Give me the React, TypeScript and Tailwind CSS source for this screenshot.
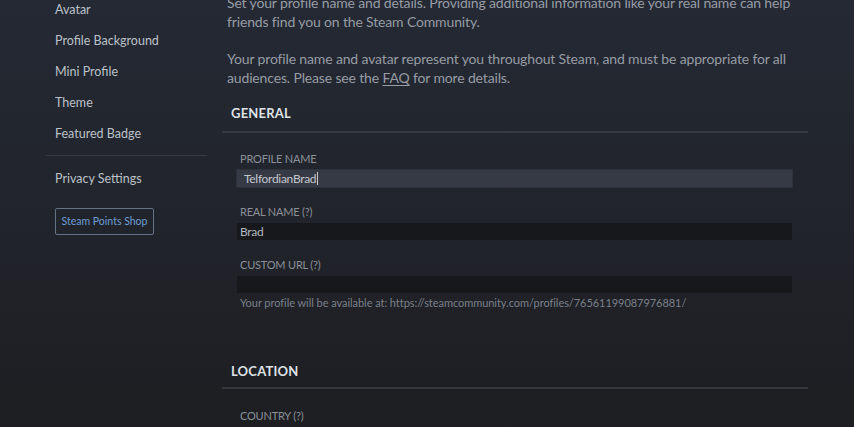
import React from "react";

const navItems = ["Avatar", "Profile Background", "Mini Profile", "Theme", "Featured Badge"];

function Field({
  label,
  value,
  active,
  children,
}: {
  label: string;
  value?: string;
  active?: boolean;
  children?: React.ReactNode;
}) {
  return (
    <div className="flex flex-col">
      <div className="h-[23px] leading-[23px] text-[11px] text-[#8b9099] tracking-[-0.2px]">{label}</div>
      <div
        className={`h-[17px] w-[555px] -ml-[3px] flex items-center text-[12px] tracking-[-0.3px] ${
          active
            ? "bg-[#363a44] pl-[7px] text-[#c3c7ce] shadow-[0_0_0_1px_#2d3139]"
            : "bg-[#16181c] pl-[3px] text-[#b4b8bf]"
        }`}
      >
        {value}
        {active && <span className="ml-[1px] h-[13px] w-px bg-[#c3c7ce]" />}
      </div>
      {children}
    </div>
  );
}

export default function App() {
  return (
    <div
      className="w-[854px] h-[427px] overflow-hidden flex bg-gradient-to-b from-[#242934] via-[#21242b] to-[#1d1e22]"
      style={{ fontFamily: "Lato, 'Open Sans', sans-serif" }}
    >
      {/* sidebar */}
      <aside className="w-[222px] shrink-0 pl-[46px] pr-[15px] -mt-[6px]">
        <ul className="flex flex-col">
          {navItems.map((item) => (
            <li key={item} className="h-[31px] leading-[31px] pl-[9px] text-[12.5px] text-[#bcc1c8]">
              {item}
            </li>
          ))}
        </ul>
        <div className="mt-[6px] h-px bg-[#363a41]" />
        <div className="mt-[7px] h-[31px] leading-[31px] pl-[9px] text-[12.5px] text-[#bcc1c8]">Privacy Settings</div>
        <button className="mt-[14px] ml-[9px] h-[27px] w-[99px] rounded-[2px] border border-[#657385] text-[10.5px] text-[#6d9ed4]">
          Steam Points Shop
        </button>
      </aside>

      {/* main */}
      <main className="flex-1 pr-[46px] -mt-[7px]">
        <div className="pl-[5px] text-[14px] leading-[19px] text-[#979ca4] tracking-[-0.15px] whitespace-nowrap">
          <p>
            Set your profile name and details. Providing additional information like your real name can help
            <br />
            friends find you on the Steam Community.
          </p>
          <p className="mt-[18px]">
            Your profile name and avatar represent you throughout Steam, and must be appropriate for all
            <br />
            audiences. Please see the <span className="underline underline-offset-2">FAQ</span> for more details.
          </p>
        </div>

        <section className="mt-[16px]">
          <h2 className="pl-[9px] h-[20px] leading-[20px] text-[13px] font-bold text-[#dfe2e6] tracking-[0.2px]">GENERAL</h2>
          <div className="mt-[8px] h-[2px] bg-[#363a41]" />
          <div className="pl-[18px] pt-[14px] flex flex-col gap-[13px]">
            <Field label="PROFILE NAME" value="TelfordianBrad" active />
            <Field label="REAL NAME (?)" value="Brad" />
            <Field label="CUSTOM URL (?)">
              <div className="mt-[2px] text-[11px] leading-[16px] text-[#7b8089] tracking-[-0.05px]">
                Your profile will be available at: https://steamcommunity.com/profiles/76561199087976881/
              </div>
            </Field>
          </div>
        </section>

        <section className="mt-[50px]">
          <h2 className="pl-[9px] h-[20px] leading-[20px] text-[13px] font-bold text-[#dfe2e6] tracking-[0.2px]">LOCATION</h2>
          <div className="mt-[6px] h-[2px] bg-[#33363c]" />
          <div className="pl-[18px] pt-[15px]">
            <div className="h-[23px] leading-[23px] text-[11px] text-[#8b9099] tracking-[-0.2px]">COUNTRY (?)</div>
            <div className="h-[17px] w-[555px] -ml-[3px] bg-[#16181c]" />
          </div>
        </section>
      </main>
    </div>
  );
}
